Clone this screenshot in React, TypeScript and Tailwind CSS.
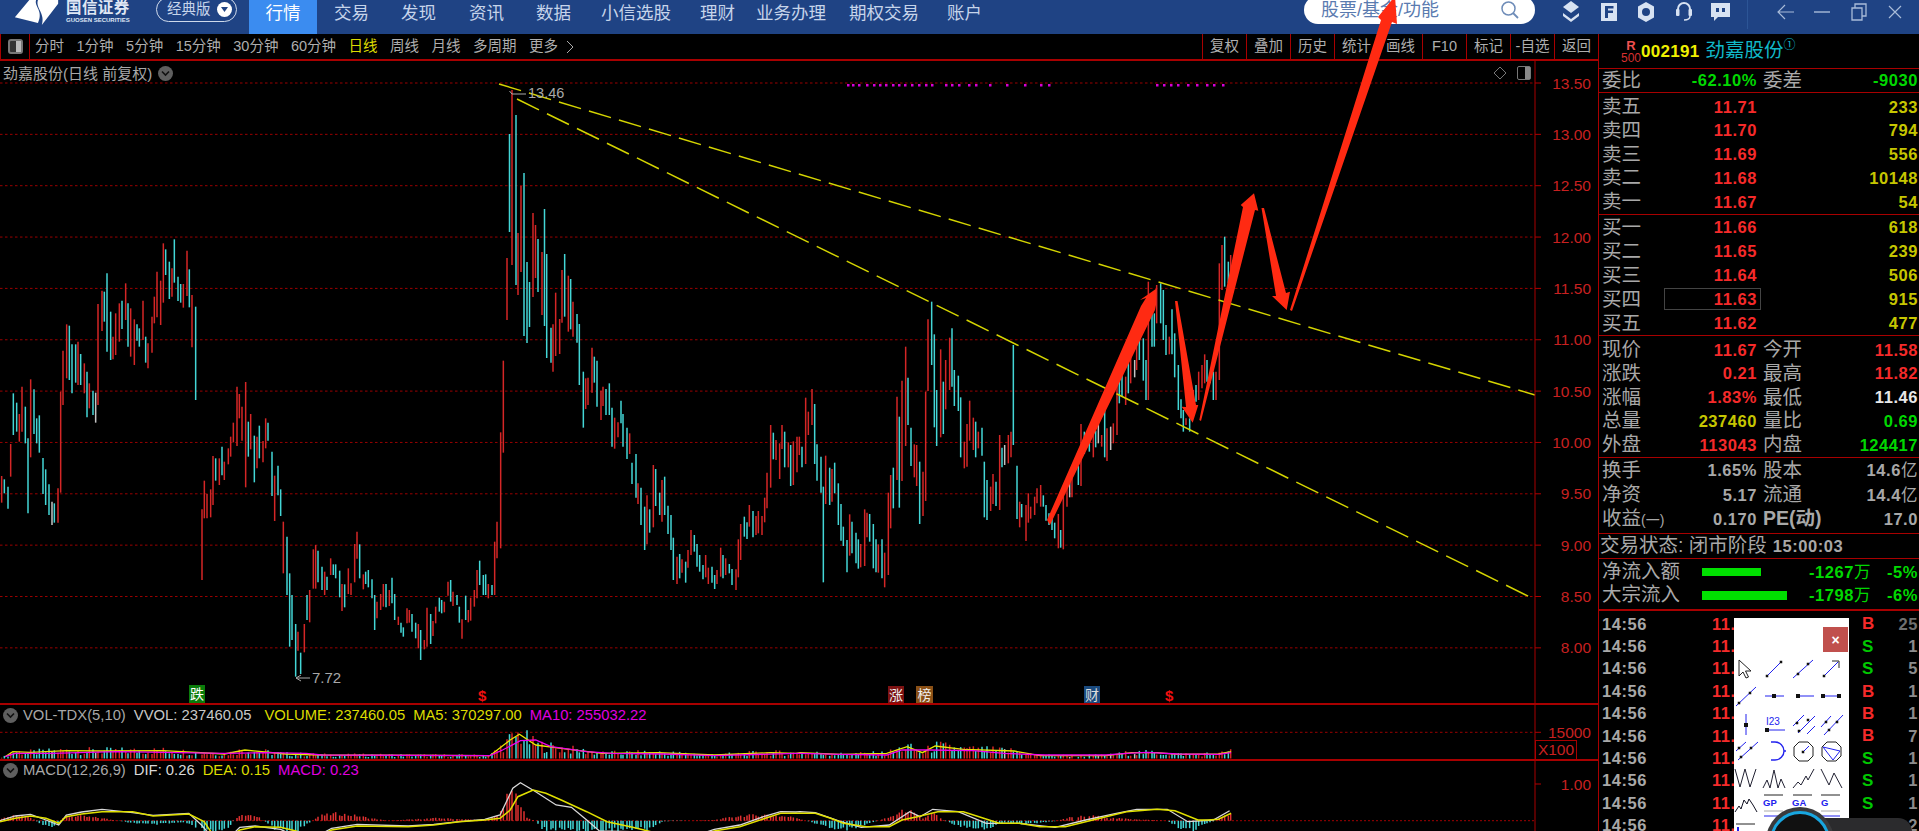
import type { ReactNode } from "react";

type Pt = [number, number];

// bars read off the reference: colour + x,top,bottom
const seg = (x0: number, y0: number, k: number, s: string) =>
  s.trim().split(/\s+/).map((b) => {
    const [x, t, e] = b.slice(1).split(",").map(Number);
    return { c: b[0], x: x0 + x / k, t: y0 + t / k, b: y0 + e / k };
  });

const bars = [
  ...seg(0, 230, 3, `r5,738,818 c13,748,790 c24,770,836 r32,642,740 c40,490,615 c50,518,605 r58,552,635 r66,470,605 c76,530,640 c84,625,850 r92,448,682 c102,478,612 c110,565,640 c118,556,668 c129,684,792 c137,718,825 c147,763,855 w156,815,885 c163,820,878 r174,775,878 r182,485,788 r189,362,525 r200,283,445 c208,287,450 c216,343,490 c227,343,458 r234,335,465 c242,372,465 r253,400,490 c261,425,562 r268,460,535 c279,482,555 w287,488,578 r294,222,525 r306,182,303 c313,185,275 c321,130,365 c332,245,390 r339,320,388 r347,250,375 r358,220,335 c366,212,297 r377,160,270 c384,220,350 r392,235,380 r403,268,405 c411,283,332 c418,295,350 r429,212,330 c437,320,398 r444,340,415 r456,260,368 r463,200,280 r471,125,262 r482,152,285 r490,40,218 c497,58,135 c508,95,207 r516,115,200 c523,28,158 c534,140,213 c542,162,218 r550,162,233 r561,62,198 c568,118,232 r576,195,352 c587,230,510
  r606,838,1050 r613,752,865 r621,792,865 r632,778,862 r639,678,825 c647,685,752 r658,685,765 c666,650,736 r673,695,750 r685,655,703 r692,620,680 r700,578,637 r711,470,648 r718,492,565 r726,530,632 r737,456,772 c745,575,680 r752,552,658 c763,617,757 r771,620,715 c778,587,685 r789,633,697 r797,565,655 c804,578,632 c816,665,798 r824,737,873 c834,707,796 c842,778,858 r850,875,1030 c861,920,1095 c869,1030,1250 c876,1095,1230 c887,1182,1340 r894,1205,1262 c902,1268,1332 r913,1182,1267 c921,1095,1170 r929,1080,1177 r940,958,1076 r947,945,1076 c954,962,1057 c966,1010,1080 r974,1025,1095 c981,1040,1080 r992,985,1035 c1000,1003,1035 c1007,1003,1045 c1019,1022,1102 r1026,1062,1143 c1034,1063,1132 r1045,1015,1092 r1053,1060,1095 r1064,942,1057 r1071,905,986 c1079,943,1045 r1090,1033,1078 c1097,1025,1062 c1105,1020,1072 c1116,1048,1105 c1124,1095,1200 r1131,1115,1165 r1142,1092,1140 r1150,1062,1130 c1158,1062,1132 r1168,1080,1128 c1176,1043,1120 c1184,1092,1170 r1195,1160,1185 c1203,1178,1208 c1210,1192,1220 r1221,1135,1180 r1228,1140,1178 c1236,1152,1205 c1247,1178,1225 r1255,1182,1255 c1262,1200,1290 r1273,1230,1258 r1281,1133,1250 c1292,1152,1242 r1299,1173,1218 r1307,1130,1180 c1318,1103,1145 c1325,1110,1150 r1333,1115,1147 r1344,1055,1097 c1352,1050,1115 r1359,1085,1128 c1371,1095,1125 c1378,1130,1178 r1386,1168,1226 c1397,1097,1170 r1405,1140,1177 r1412,1103,1172 r1423,1080,1130 r1431,1020,1105 c1439,992,1065 c1450,1035,1095 c1457,1033,1095 r1465,1062,1105 c1476,1065,1095 r1484,935,1095 r1491,875,985 r1502,607,955 r1510,392,668`),
  ...seg(0, 0, 1, `r507,258,320 c509.5,134,232 r512,90,265 c516,115,285 r518,233,295 r521,186,272 c524,173,336 c527,262,343 c529.5,282,327 r533,213,297 r535.5,225,278 c538,239,292 r542,252,315 c544.5,209,326 c546.7,254,358`),
  ...seg(500, 230, 3, `c153,293,398 r159,283,425 r167,188,378 r179,267,372 r186,120,278 c194,72,260 r205,137,305 c212,147,298 r219,215,320 c231,252,338 c238,282,465 c250,425,593 r257,445,537 r264,443,525 r276,353,488 c283,380,458 c291,392,530 r303,482,570 r309,470,528 c318,477,555 c328,460,555 c336,533,650 r344,563,656 r354,577,622 c363,512,580 c369,552,650 c381,593,687 r389,610,672 c396,698,762 c408,672,803 r414,760,822 c423,773,885 c434,830,960 r441,796,943 c449,838,908 r460,705,892 c467,717,828 c479,788,855 r486,750,875 c494,740,855 c504,827,912 c513,855,960 c520,923,1050 r531,980,1062 c539,972,1045 r546,988,1028 c557,995,1058 r564,960,1013 r573,900,975 c583,915,965 c591,942,1010 c599,975,1025 c609,1005,1048 r617,975,1042 r625,1013,1062 c636,1010,1058 c644,1035,1077 r651,1020,1062 r662,953,1040 c669,975,1045 r677,985,1035 c688,1002,1030 c696,1017,1065 r708,1018,1080 r715,928,1042 r722,882,990 c733,860,920 c741,877,927 r748,825,890 c759,843,922 r768,858,915 r775,843,910 r786,858,915 r794,803,877 r801,728,835 r812,585,773 c820,608,688 r828,630,690 r839,640,747 r846,585,657 c854,605,712 r865,637,712 c872,645,768 r880,634,765 r891,620,727 r898,620,675 c906,650,712 r917,503,702 r925,545,615 r936,477,585 c944,522,702 c951,643,752 c963,680,788 c970,770,1057 r977,677,822 c989,713,825 r996,717,815 c1004,698,790 c1015,760,885 c1023,822,932 c1030,890,948 c1041,930,1027 r1049,853,977 c1056,875,970 c1068,908,1000 c1075,928,1016 r1082,942,1012 r1094,838,1008 r1101,848,922 c1109,852,935 c1120,882,1015 c1128,928,1027 r1135,943,1028 c1146,928,1045 r1154,968,1072 r1165,788,1035 r1172,735,895 c1180,713,835 r1191,500,750`),
  ...seg(880, 280, 3, `c58,410,683 r66,302,603 r77,200,498 c84,293,435 c93,443,558 r103,493,592 r110,495,618 c119,545,732 r129,575,708 r137,335,663 r144,118,333 c155,65,255 c163,163,442 c170,330,498 r182,208,472 c190,305,462 r197,240,388 r209,173,330 c216,145,320 c223,270,378 c235,287,393 c242,352,532 r253,485,565 r261,432,560 r269,362,482 r280,413,510 c287,425,532 r295,455,505 c306,443,527 c313,545,712 c321,600,720 r332,620,693 r339,582,672 c348,605,678 r359,465,690 c366,503,562 w374,495,555 r385,465,550 r393,455,532 c400,195,495 c411,557,717 r419,665,742 c425,672,712 r438,675,783 r445,640,728 r452,680,716 r464,650,705 r471,625,670 r482,615,680 c490,646,680 c498,675,722 c507,700,735 c516,705,750 c524,728,775 r535,702,805 c542,750,803 r550,640,808 r561,620,680 w569,590,652 r576,570,652 c595,558,615 r603,432,618 c613,455,522 c628,470,515 r640,450,532 c647,452,502 w655,430,490 r665,465,500 c674,385,532 r681,445,543 w692,440,510 r700,430,490 r711,300,465`),
  ...seg(1000, 170, 3, `c358,600,700 c366,600,680 r377,620,705 c385,565,670 r392,545,640 w404,570,622 r410,490,600 c418,490,570 c430,505,632 c438,570,690 r445,335,690 c456,405,530 c463,430,530 r470,345,460 c482,340,460 c490,360,510 c498,465,555 r508,500,553 c516,418,553 c524,490,622 c535,585,720 c543,688,745 c550,720,785 r558,745,765 c569,745,785 r580,660,730 c588,645,695 r596,605,690 r606,585,655 r614,553,640 c621,570,635 c630,610,640 c640,605,690 r648,605,690 r658,280,630 r666,225,360 c674,200,350 c685,275,340 r692,255,345`),
];

const barColor: Record<string, string> = { r: "#d42626", c: "#43d6d6", w: "#c4c4c4" };

const lerp = (pts: Pt[], x: number) => {
  if (x <= pts[0][0]) return pts[0][1];
  for (let i = 1; i < pts.length; i++) {
    if (x <= pts[i][0]) {
      const [a, b] = [pts[i - 1], pts[i]];
      return a[1] + ((b[1] - a[1]) * (x - a[0])) / (b[0] - a[0]);
    }
  }
  return pts[pts.length - 1][1];
};

// pane curves, in crop units of the two bottom crops
const pane = (l: number[][], r: number[][]): Pt[] => [
  ...l.map(([x, y]) => [x / 1.96, 690 + y / 3] as Pt),
  ...r.map(([x, y]) => [800 + x / 1.96, 690 + y / 3] as Pt),
];
const poly = (p: Pt[]) => p.map(([x, y]) => `${x.toFixed(1)},${y.toFixed(1)}`).join(" ");

const ma10 = pane(
  [[10, 200], [30, 190], [100, 190], [230, 185], [440, 190], [520, 188], [600, 190], [630, 195], [960, 197], [985, 180], [1020, 152], [1050, 150], [1080, 170], [1150, 185], [1200, 190], [1300, 192], [1400, 197], [1560, 190]],
  [[0, 190], [80, 193], [170, 195], [200, 180], [250, 180], [340, 182], [400, 190], [480, 195], [600, 195], [640, 190], [680, 187], [740, 192], [820, 193], [845, 188]],
);
const ma5 = pane(
  [[10, 200], [25, 185], [60, 187], [130, 182], [200, 183], [320, 182], [440, 192], [480, 180], [560, 192], [630, 195], [960, 197], [1000, 150], [1018, 133], [1050, 165], [1100, 175], [1180, 190], [1290, 188], [1400, 195], [1510, 188], [1560, 190]],
  [[0, 188], [80, 193], [170, 190], [210, 170], [240, 188], [265, 168], [320, 178], [420, 183], [470, 197], [600, 197], [650, 188], [700, 188], [740, 193], [820, 192], [845, 185]],
);
const dea = pane(
  [[0, 395], [30, 385], [60, 378], [90, 385], [115, 400], [130, 380], [160, 372], [200, 365], [260, 365], [300, 378], [370, 372], [400, 395], [420, 440], [445, 445], [470, 420], [500, 410], [550, 412], [580, 423], [620, 440], [650, 420], [700, 408], [800, 410], [850, 405], [900, 395], [950, 390], [980, 385], [1000, 360], [1015, 320], [1045, 300], [1070, 310], [1100, 330], [1150, 365], [1190, 395], [1240, 412], [1270, 423], [1340, 450], [1400, 423], [1450, 410], [1500, 385], [1530, 370], [1560, 370]],
  [[0, 370], [30, 370], [60, 385], [85, 400], [130, 410], [175, 410], [200, 390], [230, 380], [270, 365], [320, 365], [360, 385], [390, 400], [430, 400], [470, 410], [520, 410], [560, 395], [600, 380], [640, 365], [700, 358], [735, 362], [780, 390], [800, 390], [820, 388], [845, 370]],
);
const dif = pane(
  [[0, 392], [30, 378], [60, 373], [90, 390], [115, 405], [130, 375], [160, 366], [200, 358], [260, 368], [300, 376], [370, 370], [395, 405], [420, 450], [445, 450], [470, 412], [500, 408], [550, 418], [580, 440], [620, 440], [650, 415], [700, 403], [800, 408], [850, 403], [900, 395], [950, 388], [980, 375], [1005, 295], [1020, 278], [1050, 305], [1090, 345], [1120, 352], [1150, 390], [1175, 423], [1240, 425], [1270, 440], [1340, 450], [1400, 418], [1450, 405], [1500, 378], [1530, 365], [1560, 366]],
  [[0, 365], [30, 368], [80, 395], [120, 412], [175, 405], [215, 365], [235, 380], [260, 358], [310, 365], [365, 400], [430, 400], [500, 412], [560, 390], [620, 370], [660, 358], [720, 358], [760, 395], [810, 390], [842, 362]],
);
// histogram height in real px, + is up
const hist = pane(
  [[0, 5], [30, 15], [60, 10], [85, -15], [110, -22], [125, 10], [150, 15], [200, 8], [250, -5], [300, -12], [360, -5], [390, -25], [420, -40], [445, -30], [460, 5], [480, 20], [510, 8], [540, -25], [580, -30], [610, -5], [625, 15], [660, 22], [700, 15], [725, 8], [760, 0], [860, 8], [900, 5], [950, 2], [980, 20], [1000, 90], [1020, 60], [1030, 10], [1050, 0], [1060, -25], [1150, -30], [1200, -28], [1270, -25], [1300, -2], [1400, 2], [1450, 15], [1500, 18], [1560, 10]],
  [[0, 5], [30, -8], [60, -22], [100, -25], [130, -10], [175, 10], [210, 35], [240, 5], [260, 25], [280, 2], [310, -15], [370, -25], [400, -5], [440, -10], [500, -2], [530, 10], [570, 15], [610, 8], [720, 0], [740, -20], [770, -30], [790, -10], [815, 0], [845, 25]],
).map(([x, y]) => [x, y - 690] as Pt);

const jitter = (i: number) => {
  const v = Math.sin(i * 12.9898) * 43758.5453;
  return v - Math.floor(v);
};

const priceGrid = [13.5, 13, 12.5, 12, 11.5, 11, 10.5, 10, 9.5, 9, 8.5, 8];
const priceY = (p: number) => 83 + (13.5 - p) * 102.7;

const dots = [847, 852, 858, 866, 873, 879, 885, 892, 898, 904, 911, 918, 925, 931, 945, 951, 958, 968, 975, 989, 1006, 1024, 1040, 1048, 1156, 1163, 1170, 1177, 1187, 1196, 1206, 1213, 1222];

function Markers() {
  return (
    <>
      <span className="absolute left-[189px] top-[624px] flex h-[18px] w-[16px] items-center justify-center bg-[#0b7d0b] text-[14px] leading-none text-white">跌</span>
      <span className="absolute left-[478px] top-[627px] text-[15px] font-bold leading-none text-[#f01010]">$</span>
      <span className="absolute left-[888px] top-[625px] flex h-[17px] w-[16px] items-center justify-center bg-[#7d1212] text-[14px] leading-none text-[#eee]">涨</span>
      <span className="absolute left-[916px] top-[625px] flex h-[17px] w-[17px] items-center justify-center bg-[#8a5016] text-[14px] leading-none text-[#eee]">榜</span>
      <span className="absolute left-[1084px] top-[625px] flex h-[17px] w-[16px] items-center justify-center bg-[#1a4a7e] text-[14px] leading-none text-[#ddd]">财</span>
      <span className="absolute left-[1165px] top-[627px] text-[15px] font-bold leading-none text-[#f01010]">$</span>
    </>
  );
}

function MainChart() {
  return (
    <svg width="1598" height="618" viewBox="0 85 1598 618" className="block overflow-visible">
      {priceGrid.map((p) => (
        <g key={p}>
          <line x1="0" x2="1535" y1={priceY(p)} y2={priceY(p)} stroke="#9a0000" strokeDasharray="2.5 2.5" />
          <line x1="1535" x2="1541" y1={priceY(p)} y2={priceY(p)} stroke="#b00000" />
          <text x="1591" y={priceY(p) + 5.5} textAnchor="end" fontSize="15.5" fill="#c82020">{p.toFixed(2)}</text>
        </g>
      ))}
      {bars.map((b, i) => (
        <line key={i} x1={b.x} x2={b.x} y1={b.t} y2={b.b} stroke={barColor[b.c]} strokeWidth="1.5" />
      ))}
      {dots.map((x) => (
        <rect key={x} x={x} y="84" width="2.5" height="2.5" fill="#d800d8" />
      ))}
      <line x1="499" y1="84" x2="1535" y2="395" stroke="#d4d400" strokeWidth="1.5" strokeDasharray="23 8.3" />
      <line x1="517" y1="99" x2="1532" y2="598" stroke="#d4d400" strokeWidth="1.5" strokeDasharray="24.5 8.9" />
      <path d="M512 94 l-2.5 -3 M512 94 h14" stroke="#aaa" fill="none" />
      <text x="528" y="98" fontSize="14.5" fill="#a8a8a8">13.46</text>
      <path d="M296 678 l5 -3 M296 678 l5 3 M296 678 h14" stroke="#aaa" fill="none" />
      <text x="312" y="683" fontSize="15" fill="#a8a8a8">7.72</text>
    </svg>
  );
}

function VolChart() {
  return (
    <svg width="1598" height="33" viewBox="0 726 1598 33" className="block overflow-visible">
      <line x1="0" x2="1535" y1="732.3" y2="732.3" stroke="#9a0000" strokeDasharray="2.5 2.5" />
      <line x1="1535" x2="1541" y1="732.3" y2="732.3" stroke="#b00000" />
      <text x="1591" y="738" textAnchor="end" fontSize="15.5" fill="#c82020">15000</text>
      {bars.map((b, i) => {
        const h = (758.5 - lerp(ma5, b.x)) * (0.45 + jitter(i) * 1.05);
        return <line key={i} x1={b.x} x2={b.x} y1={758.5 - h} y2={758.5} stroke={barColor[b.c]} strokeWidth="1.5" />;
      })}
      <polyline points={poly(ma5)} fill="none" stroke="#e8e800" strokeWidth="1.3" />
      <polyline points={poly(ma10)} fill="none" stroke="#f000f0" strokeWidth="1.3" />
    </svg>
  );
}

function MacdChart() {
  return (
    <svg width="1598" height="51" viewBox="0 780 1598 51" className="block overflow-visible">
      <line x1="0" x2="1535" y1="820.7" y2="820.7" stroke="#a00000" strokeDasharray="2 2" />
      <line x1="1535" x2="1541" y1="784" y2="784" stroke="#b00000" />
      <text x="1591" y="790" textAnchor="end" fontSize="15.5" fill="#c82020">1.00</text>
      {bars.map((b, i) => {
        const a = lerp(hist, b.x) * (0.7 + jitter(i + 9) * 0.5);
        return (
          <line key={i} x1={b.x} x2={b.x} y1="820.7" y2={820.7 - a} stroke={a >= 0 ? "#e03030" : "#43d6d6"} strokeWidth="1.5" />
        );
      })}
      <polyline points={poly(dif)} fill="none" stroke="#d8d8d8" strokeWidth="1.3" />
      <polyline points={poly(dea)} fill="none" stroke="#e0e000" strokeWidth="1.5" />
    </svg>
  );
}

function Chevron() {
  return (
    <span className="flex h-[15px] w-[15px] items-center justify-center rounded-full bg-[#5f5f5f]">
      <svg width="9" height="7" viewBox="0 0 9 7">
        <path d="M1 1.5 L4.5 5 L8 1.5" stroke="#111" strokeWidth="1.6" fill="none" />
      </svg>
    </span>
  );
}

const periods = ["分时", "1分钟", "5分钟", "15分钟", "30分钟", "60分钟", "日线", "周线", "月线", "多周期", "更多"];
const tools = ["复权", "叠加", "历史", "统计", "画线", "F10", "标记", "-自选", "返回"];

function Toolbar() {
  return (
    <div className="flex h-[27px] shrink-0 items-center border-b-2 border-[#a80000] text-[14.5px] text-[#aeaeae]">
      <div className="flex h-full w-[30px] items-center justify-center border-x border-[#a80000]">
        <span className="flex h-[15px] w-[15px] justify-end rounded-[3px] border-2 border-[#777] bg-[#333]">
          <span className="w-[5px] bg-[#bbb]" />
        </span>
      </div>
      <div className="ml-[5px] flex items-center gap-[12.5px]">
        {periods.map((p) => (
          <span key={p} className={p === "日线" ? "text-[#dcdc00]" : ""}>{p}</span>
        ))}
        <svg width="8" height="14" viewBox="0 0 8 14" className="-ml-[5px]">
          <path d="M1 1 L7 7 L1 13" stroke="#aaa" fill="none" />
        </svg>
      </div>
      <div className="ml-auto flex h-full">
        {tools.map((t) => (
          <span key={t} className="flex h-full w-[44px] items-center justify-center border-l border-[#a80000]">{t}</span>
        ))}
      </div>
    </div>
  );
}

function Logo() {
  return (
    <div className="ml-[14px] flex w-[128px] items-start gap-[6px]">
      <svg width="46" height="25" viewBox="0 0 46 26" className="shrink-0">
        <path d="M0 18 L15 0 L22 0 C20 7 30 11 24 24 Z" fill="#fff" />
        <path d="M24 0 L45 0 L45 4 L28 26 C32 14 21 8 24 0 Z" fill="#fff" />
      </svg>
      <div className="flex flex-col">
        <span className="text-[15.5px] font-bold leading-[15px] tracking-[0.4px] text-[#dfe7f4]">国信证券</span>
        <span className="mt-[2px] whitespace-nowrap text-[6px] font-bold leading-[7px] text-[#dfe7f4]">GUOSEN SECURITIES</span>
      </div>
    </div>
  );
}

const tabs: [string, string][] = [
  ["交易", "ml-[17px]"], ["发现", "ml-[32px]"], ["资讯", "ml-[33px]"], ["数据", "ml-[32px]"], ["小信选股", "ml-[30px]"],
  ["理财", "ml-[29px]"], ["业务办理", "ml-[21px]"], ["期权交易", "ml-[23px]"], ["账户", "ml-[28px]"],
];

function HeaderIcons() {
  return (
    <div className="flex items-center">
      <svg width="20" height="22" viewBox="0 0 20 22" className="ml-[26px]">
        <path d="M10 0 L18 6 L10 12 L2 6 Z" fill="#d7e2f2" />
        <path d="M2 12 L10 18 L18 12 L18 15 L10 21 L2 15 Z" fill="#d7e2f2" />
      </svg>
      <svg width="18" height="20" viewBox="0 0 18 20" className="ml-[19px]">
        <path fillRule="evenodd" d="M1 1 H17 V19 H1 Z M5 4 V16 H8 V11 H13 V8.5 H8 V6.5 H13.5 V4 Z" fill="#d7e2f2" />
      </svg>
      <svg width="18" height="20" viewBox="0 0 18 20" className="ml-[19px]">
        <path fillRule="evenodd" d="M9 0 L17 4.5 V15.5 L9 20 L1 15.5 V4.5 Z M9 6 A4 4 0 1 0 9 14 A4 4 0 1 0 9 6 Z" fill="#d7e2f2" />
      </svg>
      <svg width="18" height="22" viewBox="0 0 18 22" className="ml-[20px]">
        <path d="M3 13 V8 A6 6 0 0 1 15 8 V13" stroke="#d7e2f2" strokeWidth="2" fill="none" />
        <rect x="1" y="8" width="3.5" height="7" rx="1" fill="#d7e2f2" />
        <rect x="13.5" y="8" width="3.5" height="7" rx="1" fill="#d7e2f2" />
        <path d="M15 15 C15 18 12 19 9 19" stroke="#d7e2f2" strokeWidth="1.5" fill="none" />
      </svg>
      <svg width="19" height="20" viewBox="0 0 19 20" className="ml-[18px]">
        <path fillRule="evenodd" d="M0 1 H19 V15 H7 L3 19 V15 H0 Z M5 6 V10 H8 V6 Z M11 6 V10 H14 V6 Z" fill="#d7e2f2" />
      </svg>
      <span className="ml-[17px] h-[34px] w-px bg-[#2c5596]" />
      <svg width="18" height="18" viewBox="0 0 18 18" className="ml-[29px]">
        <path d="M17 9 H1 M8 2 L1 9 L8 16" stroke="#a9bcd9" strokeWidth="1.2" fill="none" />
      </svg>
      <svg width="16" height="4" viewBox="0 0 16 4" className="ml-[19px]">
        <path d="M0 2 H16" stroke="#a9bcd9" strokeWidth="1.4" />
      </svg>
      <svg width="16" height="18" viewBox="0 0 16 18" className="ml-[21px]">
        <path d="M1 5 H11 V17 H1 Z M4 5 V1 H15 V13 H11" stroke="#a9bcd9" strokeWidth="1.3" fill="none" />
      </svg>
      <svg width="14" height="14" viewBox="0 0 14 14" className="ml-[21px]">
        <path d="M1 1 L13 13 M13 1 L1 13" stroke="#a9bcd9" strokeWidth="1.2" />
      </svg>
    </div>
  );
}

function Header() {
  return (
    <header className="flex h-[34px] shrink-0 items-start bg-[#1f4384] text-[#c6d4ea]">
      <Logo />
      <div className="ml-[14px] mt-[-3px] flex h-[25px] w-[81px] items-center rounded-full border-[1.5px] border-[#cfdaeb] pl-[10px]">
        <span className="text-[14.5px] leading-none">经典版</span>
        <span className="ml-[6px] flex h-[15px] w-[15px] items-center justify-center rounded-full bg-white">
          <svg width="9" height="7" viewBox="0 0 9 7"><path d="M1 1 L4.5 6 L8 1 Z" fill="#1f4384" /></svg>
        </span>
      </div>
      <div className="ml-[12px] flex h-[34px] w-[68px] items-center justify-center bg-[#3b8cf0] pb-[8px] text-[17.5px] text-white">行情</div>
      {tabs.map(([t, m]) => (
        <span key={t} className={`${m} flex h-[26px] items-center whitespace-nowrap text-[17.5px]`}>{t}</span>
      ))}
      <div className="ml-[322px] mt-[-4px] flex h-[28px] w-[231px] items-center justify-between rounded-full bg-white pl-[17px] pr-[15px]">
        <span className="text-[18px] leading-none text-[#5a7bb0]">股票/基金/功能</span>
        <svg width="20" height="20" viewBox="0 0 20 20">
          <circle cx="8.5" cy="8.5" r="6.5" stroke="#6e8cb8" strokeWidth="1.5" fill="none" />
          <path d="M13 13 L18 18" stroke="#6e8cb8" strokeWidth="1.8" />
        </svg>
      </div>
      <div className="mt-[-1px] flex h-[26px] items-center"><HeaderIcons /></div>
    </header>
  );
}

const Red = "text-[#f52a2a]";
const Yel = "text-[#c6c600]";
const Grn = "text-[#00d800]";
const Gry = "text-[#a8a8a8]";
const Wht = "text-[#e8e8e8]";

const sell: [string, string, string][] = [["卖五", "11.71", "233"], ["卖四", "11.70", "794"], ["卖三", "11.69", "556"], ["卖二", "11.68", "10148"], ["卖一", "11.67", "54"]];
const buy: [string, string, string][] = [["买一", "11.66", "618"], ["买二", "11.65", "239"], ["买三", "11.64", "506"], ["买四", "11.63", "915"], ["买五", "11.62", "477"]];
const quote: [string, string, string, string, string, string][] = [
  ["现价", "11.67", Red, "今开", "11.58", Red],
  ["涨跌", "0.21", Red, "最高", "11.82", Red],
  ["涨幅", "1.83%", Red, "最低", "11.46", Wht],
  ["总量", "237460", Yel, "量比", "0.69", Grn],
  ["外盘", "113043", Red, "内盘", "124417", Grn],
];
const fund: [ReactNode, string, string, ReactNode][] = [
  ["换手", "1.65%", "股本", <>14.6<span className="font-normal">亿</span></>],
  ["净资", "5.17", "流通", <>14.4<span className="font-normal">亿</span></>],
  [<>收益<span className="text-[14px]">(一)</span></>, "0.170", "PE(动)", "17.0"],
];
const ticks: [string, string][] = [["B", "25"], ["S", "1"], ["S", "5"], ["B", "1"], ["B", "1"], ["B", "7"], ["S", "1"], ["S", "1"], ["S", "1"], ["B", "2"]];

const num = "font-bold tracking-[0.55px] text-[16.5px] leading-none";
const lab = "text-[19.5px] leading-none text-[#a8a8a8] whitespace-nowrap";

function Book({ rows, pt, rowH, mark }: { rows: [string, string, string][]; pt: string; rowH: string; mark?: string }) {
  return (
    <div className={`shrink-0 border-b border-[#a80000] ${pt}`}>
      {rows.map(([l, p, v]) => (
        <div key={l} className={`flex ${rowH} items-center pl-[3px]`}>
          <span className={`${lab} w-[40px]`}>{l}</span>
          <span className={`relative w-[115px] text-right ${num} ${Red}`}>
            {mark === l && <span className="absolute left-[22px] right-[-4px] top-[-3.5px] h-[22px] border-[1.5px] border-[#444]" />}
            {p}
          </span>
          <span className={`flex-1 pr-[1px] text-right ${num} ${Yel}`}>{v}</span>
        </div>
      ))}
    </div>
  );
}

function Panel() {
  return (
    <aside className="flex w-[321px] shrink-0 flex-col overflow-hidden border-l border-[#a80000]">
      <div className="flex h-[35px] shrink-0 items-center border-b border-[#a80000] pl-[22px]">
        <div className="flex w-[20px] flex-col items-center text-[#d83030]">
          <span className="text-[13px] font-bold leading-[13px] text-[#f05050]">R</span>
          <span className="text-[12px] leading-[12px]">500</span>
        </div>
        <span className="text-[17px] font-bold leading-none tracking-[0.3px] text-[#f0f000]">002191</span>
        <span className="ml-[6px] text-[19.5px] leading-none text-[#10b8c8]">劲嘉股份</span>
        <span className="mb-[12px] text-[12px] leading-none text-[#10b8c8]">①</span>
      </div>
      <div className="flex h-[24px] shrink-0 items-center border-b border-[#a80000] pl-[3px]">
        <span className={`${lab} w-[40px]`}>委比</span>
        <span className={`w-[115px] text-right ${num} ${Grn}`}>-62.10%</span>
        <span className={`${lab} ml-[6px] w-[40px]`}>委差</span>
        <span className={`flex-1 pr-[1px] text-right ${num} ${Grn}`}>-9030</span>
      </div>
      <Book rows={sell} pt="pt-[2px]" rowH="h-[23.75px]" />
      <Book rows={buy} pt="pt-[1px]" rowH="h-[23.9px]" mark="买四" />
      <div className="shrink-0 border-b border-[#a80000] pt-[2px]">
        {quote.map(([a, b, bc, c, d, dc]) => (
          <div key={a} className="flex h-[23.7px] items-center pl-[3px]">
            <span className={`${lab} w-[40px]`}>{a}</span>
            <span className={`w-[115px] text-right ${num} ${bc}`}>{b}</span>
            <span className={`${lab} ml-[6px] w-[40px]`}>{c}</span>
            <span className={`flex-1 pr-[1px] text-right ${num} ${dc}`}>{d}</span>
          </div>
        ))}
      </div>
      <div className="shrink-0 border-b border-[#a80000] pb-[1.5px] pt-[1px]">
        {fund.map(([a, b, c, d]) => (
          <div key={b} className="flex h-[24.2px] items-center pl-[3px]">
            <span className={`${lab} w-[40px]`}>{a}</span>
            <span className={`w-[115px] text-right ${num} ${Gry}`}>{b}</span>
            <span className={`${lab} ml-[6px] w-[40px] ${c === "PE(动)" ? "text-[16.5px] font-bold" : ""}`}>{c}</span>
            <span className={`flex-1 pr-[1px] text-right ${num} ${Gry}`}>{d}</span>
          </div>
        ))}
      </div>
      <div className="flex h-[25.5px] shrink-0 items-center border-b border-[#a80000] pl-[1px]">
        <span className={lab}>交易状态: 闭市阶段</span>
        <span className={`ml-[6px] ${num} ${Gry}`}>15:00:03</span>
      </div>
      <div className="h-[52px] shrink-0 border-b-2 border-[#a80000] pt-[1px]">
        <div className="flex h-[23.3px] items-center pl-[3px]">
          <span className={`${lab} w-[100px]`}>净流入额</span>
          <span className="h-[8.5px] w-[59px] bg-[#00e000]" />
          <span className={`ml-auto ${num} ${Grn}`}>-1267<span className="font-normal">万</span></span>
          <span className={`w-[48px] pr-[1px] text-right ${num} ${Grn}`}>-5%</span>
        </div>
        <div className="flex h-[23.3px] items-center pl-[3px]">
          <span className={`${lab} w-[100px]`}>大宗流入</span>
          <span className="h-[9px] w-[85px] bg-[#00e000]" />
          <span className={`ml-auto ${num} ${Grn}`}>-1798<span className="font-normal">万</span></span>
          <span className={`w-[48px] pr-[1px] text-right ${num} ${Grn}`}>-6%</span>
        </div>
      </div>
      <div className="shrink-0 pt-[1.5px]">
        {ticks.map(([s, v], i) => (
          <div key={i} className="flex h-[22.4px] items-center pl-[3px]">
            <span className={`${num} ${Gry} w-[110px]`}>14:56</span>
            <span className={`${num} ${Red} w-[150px]`}>11.66</span>
            <span className={`w-[14px] text-[17px] font-bold leading-none ${s === "B" ? Red : "text-[#00c800]"}`}>{s}</span>
            <span className={`flex-1 pr-[1px] text-right ${num} ${v === "25" ? "text-[#707070]" : "text-[#8c8c8c]"}`}>{v}</span>
          </div>
        ))}
      </div>
    </aside>
  );
}

const B = "#2222ee";
const Sq = ({ x, y, s = 3 }: { x: number; y: number; s?: number }) => <rect x={x - s / 2} y={y - s / 2} width={s} height={s} fill="#111" />;

const paletteIcons: ReactNode[] = [
  <path d="M6 4 V20 L10 16 L13 22 L15.5 21 L12.5 15 L18 15 Z" fill="#fff" stroke="#222" />,
  <><path d="M6 20 L20 6" stroke={B} /><Sq x={6} y={20} s={2.5} /><Sq x={20} y={6} s={2.5} /></>,
  <><path d="M3 22 L23 4" stroke={B} /><Sq x={8} y={18} s={2.5} /><Sq x={18} y={8} s={2.5} /></>,
  <><path d="M6 20 L20 6" stroke={B} /><path d="M14 5 H21 V12" stroke="#222" fill="none" /><Sq x={6} y={20} s={2.5} /></>,
  <><path d="M3 23 L23 4" stroke={B} /><Sq x={6} y={20} s={2.5} /><Sq x={17} y={10} s={2.5} /></>,
  <><path d="M4 13 H23" stroke={B} /><Sq x={13} y={13} s={4} /></>,
  <><path d="M8 13 H24" stroke={B} /><Sq x={8} y={13} s={4} /></>,
  <><path d="M5 13 H21" stroke={B} /><Sq x={5} y={13} s={4} /><Sq x={21} y={13} s={4} /></>,
  <><path d="M13 3 V24" stroke={B} /><Sq x={13} y={14} s={4} /></>,
  <><text x="5" y="14" fontSize="10" fill={B}>I23</text><path d="M6 19 H24" stroke={B} /><Sq x={6} y={19} s={4} /></>,
  <><path d="M3 15 L14 4 M8 22 L25 5 M17 23 L25 15" stroke={B} /><Sq x={7} y={12} s={2.5} /><Sq x={18} y={9} s={2.5} /><Sq x={9} y={20} s={2.5} /></>,
  <><path d="M3 16 L13 5 M6 24 L25 4" stroke={B} /><Sq x={8} y={11} s={2.5} /><Sq x={11} y={19} s={2.5} /><Sq x={19} y={11} s={2.5} /></>,
  <><path d="M3 13 L13 4 M5 22 L25 4" stroke={B} /><Sq x={6} y={10} s={2.5} /><Sq x={8} y={19} s={2.5} /><Sq x={18} y={10} s={2.5} /></>,
  <path d="M10 4 H14 A9 9 0 0 1 14 22 H10 M23 13 H25" stroke={B} strokeWidth="1.4" fill="none" />,
  <><path d="M9 4 H18 L23 9 V18 L18 23 H9 L4 18 V9 Z" stroke="#222" fill="none" /><path d="M13 14 L19 8" stroke={B} /><Sq x={13} y={14} s={2.5} /></>,
  <><path d="M9 4 H18 L23 9 V18 L18 23 H9 L4 18 V9 Z" stroke="#222" fill="none" /><path d="M5 9 L22 13 L15 22 Z" stroke={B} fill="none" /></>,
  <path d="M2 4 L7 22 L12 4 L17 22 L23 4" stroke="#223" fill="none" />,
  <path d="M2 23 L6 15 L9 23 L13 5 L17 23 L20 14 L24 23" stroke="#223" fill="none" />,
  <path d="M3 23 L8 17 L11 20 L16 11 L18 15 L24 4" stroke="#223" fill="none" />,
  <path d="M3 4 L11 20 L16 8 L24 23" stroke="#223" fill="none" />,
  <path d="M2 20 L6 14 L8 17 L11 8 L14 12 L16 7 L20 13 L24 20" stroke="#112" fill="none" />,
  <><path d="M3 3 H22" stroke="#222" /><text x="2" y="14" fontSize="9.5" fontWeight="bold" fill={B}>GP</text><path d="M3 19 H22" stroke="#aaa" /><path d="M3 24 H22" stroke={B} /></>,
  <><path d="M3 3 H22" stroke="#222" /><text x="2" y="14" fontSize="9.5" fontWeight="bold" fill={B}>GA</text><path d="M3 19 H22" stroke="#aaa" /><path d="M3 24 H22" stroke={B} /></>,
  <><path d="M3 3 H22" stroke="#222" /><text x="3" y="14" fontSize="9.5" fontWeight="bold" fill={B}>G</text><path d="M3 19 H22" stroke="#aaa" /><path d="M3 24 H22" stroke={B} /></>,
  <><path d="M3 4 H22" stroke="#222" /><path d="M5 7 V14" stroke={B} strokeWidth="2" /></>,
];

function Palette() {
  return (
    <div className="absolute left-[1734px] top-[618px] h-[213px] w-[115px] overflow-hidden bg-white">
      <div className="flex justify-end pr-[1px] pt-[9px]">
        <span className="flex h-[25px] w-[25px] items-center justify-center bg-[#c0504d] text-[14px] font-bold leading-none text-white">×</span>
      </div>
      <div className="ml-[-1px] mt-[4px] grid grid-cols-[repeat(4,28.4px)] auto-rows-[27.3px]">
        {paletteIcons.map((ic, i) => (
          <svg key={i} width="27" height="27" viewBox="0 0 27 27" className="block">{ic}</svg>
        ))}
      </div>
    </div>
  );
}

function SpeedWidget() {
  return (
    <>
      <div className="absolute left-[1820px] top-[818px] h-[30px] w-[92px] rounded-tr-[14px] bg-[#2b2b2d]" />
      <div className="absolute left-[1766px] top-[807px] flex h-[68px] w-[68px] items-center justify-center rounded-full bg-[#3a3a3c]">
        <div className="h-[60px] w-[60px] rounded-full border-[3px] border-[#18a6e0] bg-[#111]" />
      </div>
    </>
  );
}

const arrows = [
  "1047,520 1141,306 1146,298 1140,300 1156.5,288.5 1156,305 1155,310 1050,525",
  "1175,301 1177.5,301 1196,405 1198.3,405 1192.7,422.7 1181.7,406.7 1186,407",
  "1199.3,420 1243,207 1240.7,205 1254,193.3 1258.3,210.7 1255,210 1201,421",
  "1261.5,208 1264,208 1286,293 1290,291.7 1286.7,310 1272,296 1276,296",
  "1290,310 1381,20 1378,17 1395,-4 1397,24 1392,22 1292,311",
];

export default function App() {
  return (
    <div className="relative flex h-[831px] w-[1919px] flex-col overflow-hidden bg-black [font-family:'Liberation_Sans','Noto_Sans_CJK_SC',sans-serif]">
      <Header />
      <div className="flex min-h-0 flex-1">
        <div className="flex w-[1598px] shrink-0 flex-col">
          <Toolbar />
          <div className="relative shrink-0">
            <div className="flex h-[24px] items-center pl-[3px] text-[15px] leading-none text-[#a8a8a8]">
              <span>劲嘉股份(日线 前复权)</span>
              <span className="ml-[6px]"><Chevron /></span>
              <span className="ml-auto mr-[67px] flex items-center gap-[10px]">
                <svg width="14" height="14" viewBox="0 0 14 14"><path d="M7 1 L13 7 L7 13 L1 7 Z" stroke="#777" fill="none" /></svg>
                <span className="flex h-[14px] w-[14px] justify-end rounded-[2px] border-[1.5px] border-[#777]"><span className="w-[5px] bg-[#888]" /></span>
              </span>
            </div>
            <MainChart />
            <Markers />
          </div>
          <div className="shrink-0 border-t-2 border-[#a80000]">
            <div className="flex h-[21px] items-center gap-[8px] whitespace-nowrap pl-[3px] text-[14.8px] leading-none">
              <Chevron />
              <span className="-ml-[3px] text-[#a8a8a8]">VOL-TDX(5,10)</span>
              <span className="text-[#c8c8c8]">VVOL: 237460.05</span>
              <span className="ml-[5px] text-[#dcdc00]">VOLUME: 237460.05</span>
              <span className="text-[#dcdc00]">MA5: 370297.00</span>
              <span className="text-[#e000e0]">MA10: 255032.22</span>
            </div>
            <VolChart />
          </div>
          <div className="relative shrink-0 border-t-2 border-[#a80000]">
            <div className="flex h-[19px] items-center gap-[8px] whitespace-nowrap pl-[3px] text-[14.8px] leading-none">
              <Chevron />
              <span className="-ml-[3px] text-[#a8a8a8]">MACD(12,26,9)</span>
              <span className="text-[#d8d8d8]">DIF: 0.26</span>
              <span className="text-[#dcdc00]">DEA: 0.15</span>
              <span className="text-[#e000e0]">MACD: 0.23</span>
            </div>
            <MacdChart />
            <span className="absolute left-[1535px] top-[-21px] flex h-[20px] w-[42px] items-center justify-center border border-[#a80000] text-[15.5px] leading-none text-[#c82020]">X100</span>
          </div>
        </div>
        <Panel />
      </div>
      <Palette />
      <SpeedWidget />
      <svg width="1919" height="831" viewBox="0 0 1919 831" className="pointer-events-none absolute left-0 top-0">
        {arrows.map((p) => (
          <polygon key={p} points={p} fill="#ff2a12" />
        ))}
        <line x1="1535" x2="1535" y1="61" y2="831" stroke="#a80000" />
      </svg>
    </div>
  );
}
